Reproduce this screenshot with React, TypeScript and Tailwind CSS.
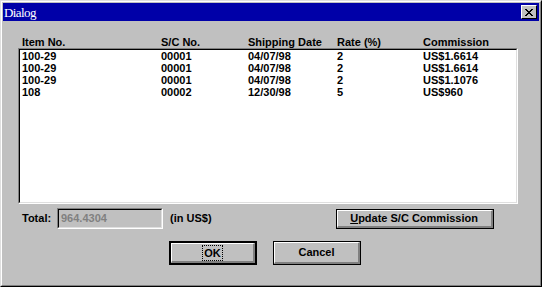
import React from 'react';

interface Row {
  item: string;
  sc: string;
  date: string;
  rate: string;
  commission: string;
}

const rows: Row[] = [
  { item: '100-29', sc: '00001', date: '04/07/98', rate: '2', commission: 'US$1.6614' },
  { item: '100-29', sc: '00001', date: '04/07/98', rate: '2', commission: 'US$1.6614' },
  { item: '100-29', sc: '00001', date: '04/07/98', rate: '2', commission: 'US$1.1076' },
  { item: '108', sc: '00002', date: '12/30/98', rate: '5', commission: 'US$960' },
];

const cols = 'grid grid-cols-[139px_87px_89px_86px_1fr]';

// raised push button, NT style: black outline + highlight/shadow inside
const Button: React.FC<{ className?: string; isDefault?: boolean; children: React.ReactNode }> = ({
  className = '',
  isDefault,
  children,
}) => (
  <div className={`${className} ${isDefault ? 'border-2' : 'border'} border-black bg-[#c0c0c0]`}>
    <div className="flex h-full w-full items-center justify-center border-t border-l border-r-2 border-b-2 border-t-white border-l-white border-r-[#808080] border-b-[#808080]">
      {children}
    </div>
  </div>
);

const App: React.FC = () => {
  return (
    <div
      className="h-[287px] w-[542px] border border-t-[#dfdfdf] border-l-[#dfdfdf] border-r-black border-b-black bg-[#c0c0c0] text-[11px] font-bold text-black"
      style={{ fontFamily: '"Liberation Sans", Arial, sans-serif' }}
    >
      <div className="flex h-full flex-col border border-t-white border-l-white border-r-[#808080] border-b-[#808080] p-px">
        {/* title bar */}
        <div className="flex h-[18px] items-center justify-between bg-[#0000a8] pl-[1px] pr-[2px]">
          <span
            className="text-[13px] font-normal leading-none tracking-[-0.6px] text-white"
            style={{ fontFamily: '"Liberation Serif", "Times New Roman", serif' }}
          >
            Dialog
          </span>
          <div className="flex h-[14px] w-[16px] items-center justify-center border border-t-white border-l-white border-r-black border-b-black bg-[#c0c0c0]">
            <svg width="8" height="7" viewBox="0 0 8 7" shapeRendering="crispEdges">
              <path
                d="M0 0h2v1h-2zM6 0h2v1h-2zM1 1h2v1h-2zM5 1h2v1h-2zM2 2h4v1h-4zM3 3h2v1h-2zM2 4h4v1h-4zM1 5h2v1h-2zM5 5h2v1h-2zM0 6h2v1h-2zM6 6h2v1h-2z"
                fill="#000"
              />
            </svg>
          </div>
        </div>

        <div className="flex flex-col pl-[15px]">
          {/* column headings */}
          <div className={`${cols} mt-[16px] h-[11px] pl-[4px] leading-[11px]`}>
            <span>Item No.</span>
            <span>S/C No.</span>
            <span>Shipping Date</span>
            <span>Rate (%)</span>
            <span>Commission</span>
          </div>

          {/* list box */}
          <div className="h-[156px] w-[500px] border border-t-[#808080] border-l-[#808080] border-r-white border-b-white">
            <div className="h-full w-full border border-t-black border-l-black border-r-[#dfdfdf] border-b-[#dfdfdf] bg-white pl-[2px]">
              {rows.map((r, i) => (
                <div key={i} className={`${cols} h-[12px] leading-[12px]`}>
                  <span>{r.item}</span>
                  <span>{r.sc}</span>
                  <span>{r.date}</span>
                  <span>{r.rate}</span>
                  <span>{r.commission}</span>
                </div>
              ))}
            </div>
          </div>

          {/* total row */}
          <div className="mt-[4px] flex h-[21px] items-center">
            <span className="ml-[4px] w-[35px]">Total:</span>
            <div className="h-[21px] w-[106px] border border-t-[#808080] border-l-[#808080] border-r-white border-b-white">
              <div className="flex h-full items-center border border-t-black border-l-black border-r-[#dfdfdf] border-b-[#dfdfdf] pl-[2px] text-[#808080]">
                964.4304
              </div>
            </div>
            <span className="ml-[7px]">(in US$)</span>
            <Button className="ml-[124px] h-[20px] w-[158px]">
              <span>
                <span className="underline">U</span>pdate S/C Commission
              </span>
            </Button>
          </div>

          {/* OK / Cancel */}
          <div className="mt-[12px] flex gap-[16px] pl-[151px]">
            <Button isDefault className="h-[24px] w-[88px]">
              <span className="border border-dotted border-black px-[1px] leading-[14px]">OK</span>
            </Button>
            <Button className="h-[24px] w-[88px]">
              <span>Cancel</span>
            </Button>
          </div>
        </div>
      </div>
    </div>
  );
};

export default App;
